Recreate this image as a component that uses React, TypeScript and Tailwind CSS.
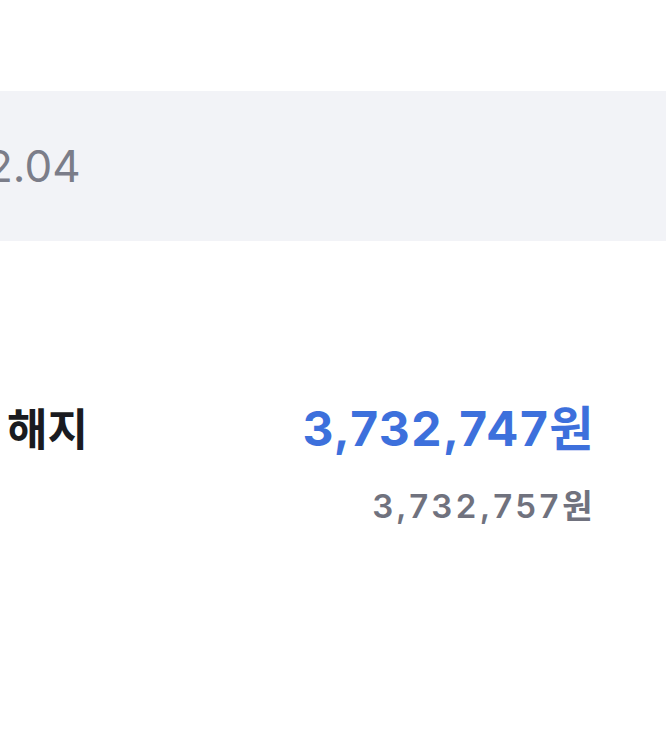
import React from "react";

const App: React.FC = () => {
  return (
    <div className="min-h-screen w-[666px] overflow-hidden bg-white font-['Inter','Noto_Sans_CJK_KR',sans-serif]">
      {/* date band */}
      <div className="mt-[91px] flex h-[150px] items-center bg-[#f2f3f7]">
        <span className="-ml-[14px] text-[44px] font-normal leading-none text-[#7b7d89]">2.04</span>
      </div>

      {/* amount row */}
      <div className="mt-[164px] flex items-start justify-between pl-[7px] pr-[74px]">
        <span className="font-['Noto_Sans_CJK_KR',sans-serif] text-[44px] font-bold leading-none text-[#1a1b20]">
          해지
        </span>
        <div className="flex flex-col items-end">
          <span className="-mr-[3px] text-[48px] font-bold leading-none tracking-[1.5px] text-[#3d70dc]">
            3,732,747원
          </span>
          <span className="-mr-[4px] mt-[37px] text-[33px] font-semibold leading-none tracking-[3.5px] text-[#70727e]">
            3,732,757원
          </span>
        </div>
      </div>
    </div>
  );
};

export default App;
